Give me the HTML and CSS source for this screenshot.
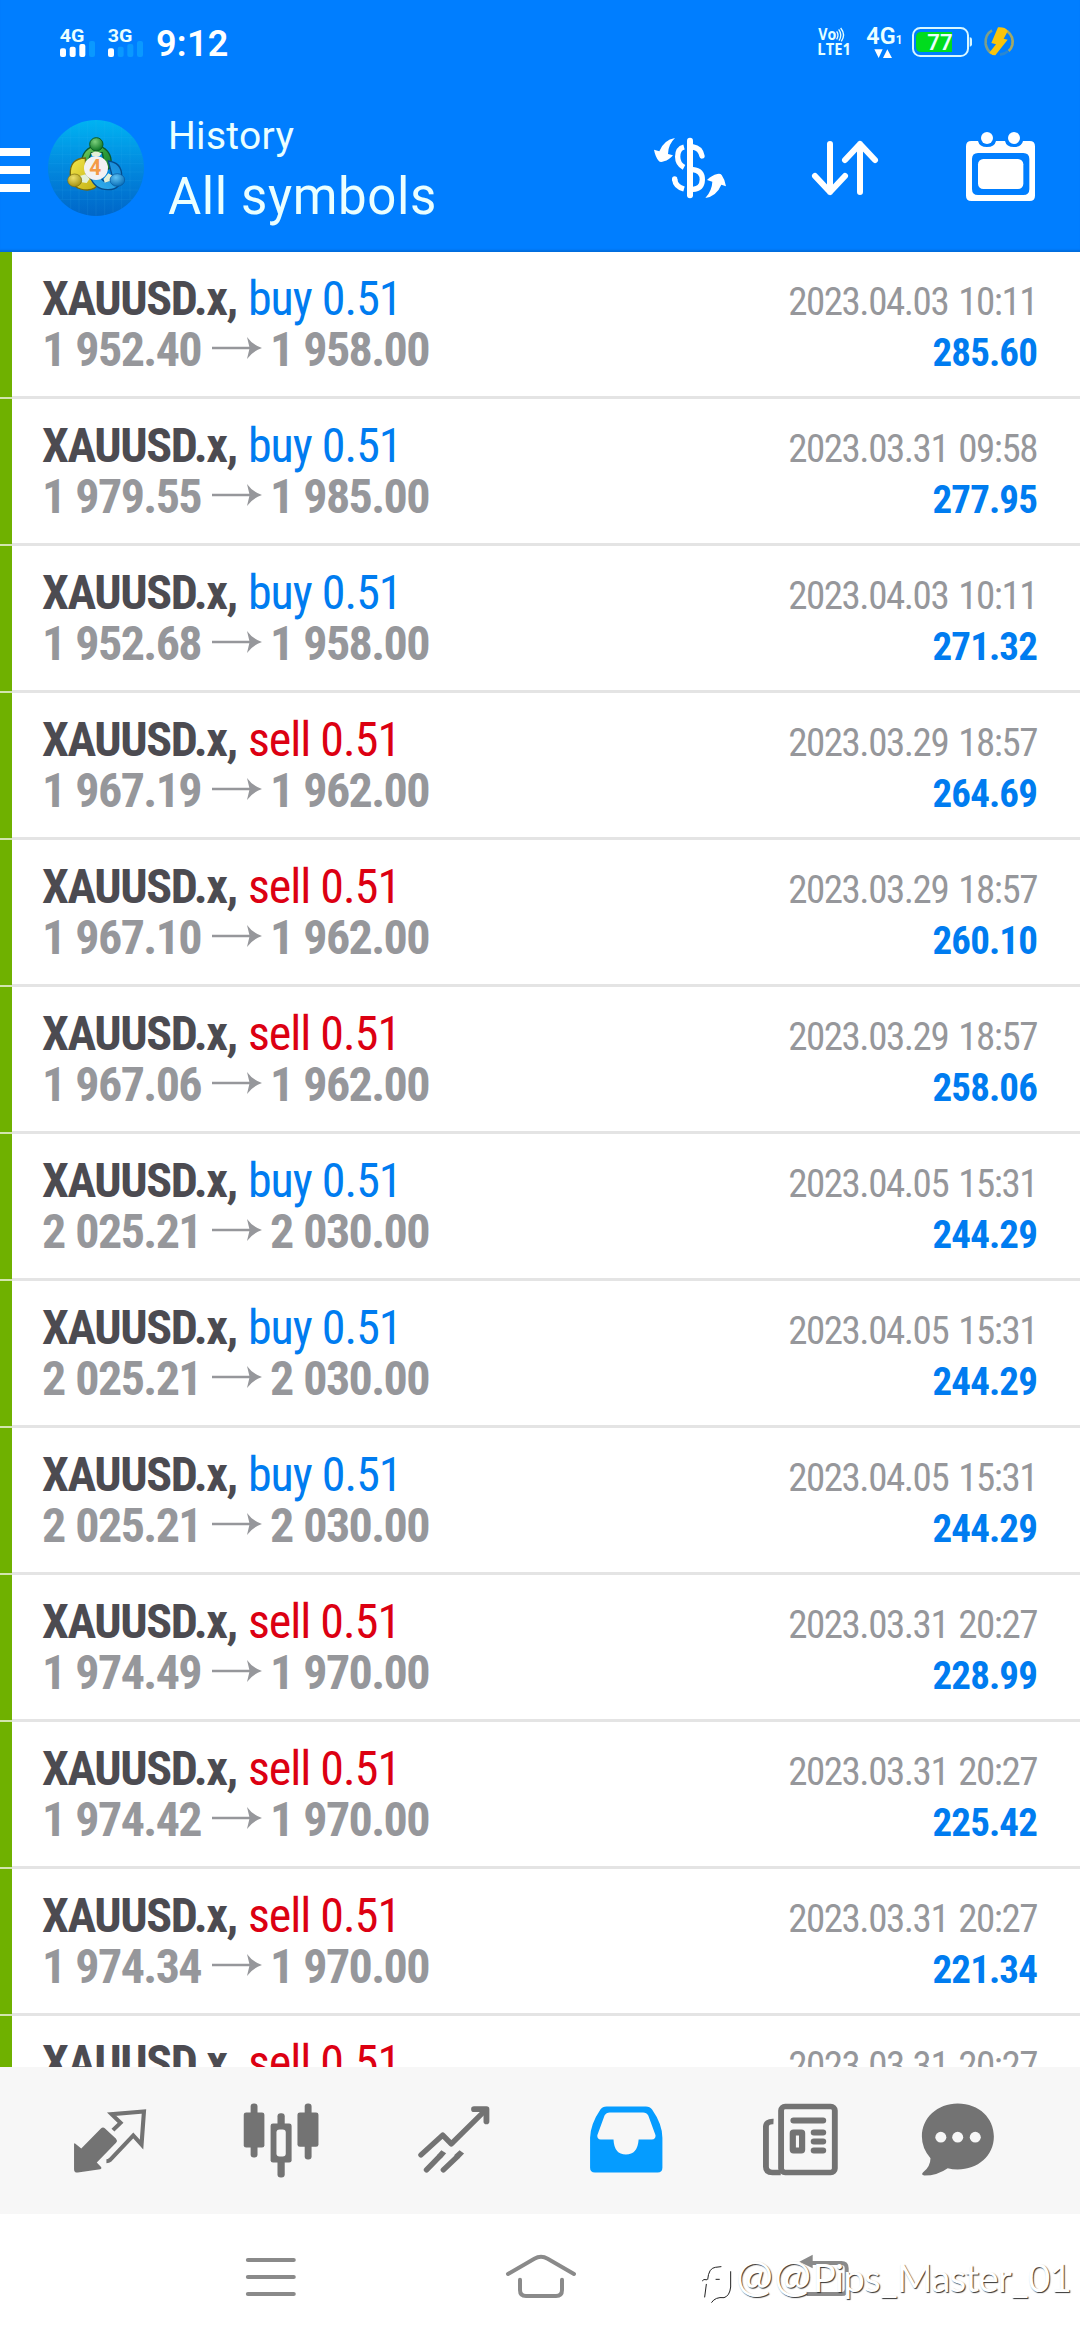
FILE: index.html
```html
<!DOCTYPE html>
<html lang="en">
<head>
<meta charset="utf-8">
<title>History</title>
<link rel="stylesheet" href="styles.css">
</head>
<body>
<svg class="defs" width="0" height="0" aria-hidden="true">
  <symbol id="to" viewBox="0 0 150 66"><path d="M0 29H112L105 0Q122 24 150 33Q122 42 105 66L112 37H0Z"/></symbol>
</svg>
<div class="screen">
  <header class="header">
    <div class="status">
      <svg width="36" height="36" viewBox="180 72 108 108"><text class="net" x="179" y="125" textLength="74" lengthAdjust="spacingAndGlyphs">4G</text><g fill="#fff"><rect x="180" y="145" width="18" height="26" rx="6"/><rect x="209" y="140" width="18" height="31" rx="6"/><rect x="238" y="132" width="18" height="39" rx="6"/></g><rect x="267" y="123" width="18" height="48" rx="6" fill="#0a99ff"/></svg>
      <svg width="36" height="36" viewBox="324 72 108 108"><text class="net" x="323" y="125" textLength="74" lengthAdjust="spacingAndGlyphs">3G</text><rect x="324" y="145" width="18" height="26" rx="6" fill="#fff"/><g fill="#0a99ff"><rect x="353" y="140" width="18" height="31" rx="6"/><rect x="382" y="132" width="18" height="39" rx="6"/><rect x="411" y="123" width="18" height="48" rx="6"/></g></svg>
      <span class="clock">9:12</span>
      <div class="status-right">
        <svg width="36" height="36" viewBox="648 72 108 108"><text class="lte" x="655" y="121" textLength="54" lengthAdjust="spacingAndGlyphs">Vo</text><path d="M710 94Q718 105 710 118M716 88Q728 104 717 122M722 84Q738 104 724 124" fill="none" stroke="#e4ffff" stroke-width="4"/><text class="lte" x="652" y="165" textLength="101" lengthAdjust="spacingAndGlyphs">LTE1</text></svg>
        <svg width="38" height="36" viewBox="792 72 114 108"><text class="g4" x="799" y="132" textLength="88" lengthAdjust="spacingAndGlyphs">4G</text><text class="g1" x="887" y="132">1</text><path d="M823 148H848L836 174ZM849 174L862 148L876 174Z" fill="#fff"/></svg>
        <svg width="62" height="36" viewBox="933 72 186 108"><rect x="939" y="84" width="165" height="84" rx="22" fill="none" stroke="#d9f7ff" stroke-width="6"/><path d="M1056 96V156H964Q948 156 948 140V112Q948 96 964 96Z" fill="#00dc1e"/><path d="M1109 112Q1116 112 1116 118V133Q1116 140 1109 140Z" fill="#d9f7ff"/><text class="bat" x="982" y="149" textLength="76" lengthAdjust="spacingAndGlyphs">77</text></svg>
        <svg width="34" height="36" viewBox="1146 72 102 108"><g fill="none" stroke-width="8"><path d="M1176 91Q1154 104 1157 132Q1160 150 1174 160" stroke="#7d9f88"/><path d="M1222 94Q1242 110 1237 135Q1234 146 1226 153" stroke="#a2a966"/><path d="M1224 154Q1212 164 1200 163" stroke="#2b87cf"/></g><path d="M1194 82Q1214 80 1224 92L1211 116L1223 119L1186 166Q1175 166 1168 158L1188 133L1174 129Z" fill="#f8c40c"/></svg>
      </div>
    </div>
    <div class="toolbar">
      <svg class="burger" width="30" height="44" viewBox="0 0 30 44"><path d="M0 0H30V8H0ZM0 18H30V26H0ZM0 36H30V44H0Z" fill="#fff"/></svg>
      <svg class="logo" width="96" height="96" viewBox="24 30 288 288">
        <defs>
          <linearGradient id="disc" x1="0" y1="0" x2="0" y2="1"><stop offset="0" stop-color="#00b3f2"/><stop offset=".5" stop-color="#0288de"/><stop offset="1" stop-color="#0066c8"/></linearGradient>
          <linearGradient id="gr" x1="0" y1="0" x2="1" y2="1"><stop offset="0" stop-color="#8fdc6a"/><stop offset=".5" stop-color="#2f9e3c"/><stop offset="1" stop-color="#14802c"/></linearGradient>
          <linearGradient id="ye" x1="0" y1="0" x2="1" y2="1"><stop offset="0" stop-color="#f3e64c"/><stop offset="1" stop-color="#c1ae10"/></linearGradient>
          <linearGradient id="bl" x1="1" y1="0" x2="0" y2="1"><stop offset="0" stop-color="#1489d8"/><stop offset="1" stop-color="#35b0ee"/></linearGradient>
          <radialGradient id="gh" cx=".4" cy=".3" r=".7"><stop offset="0" stop-color="#7cd07c"/><stop offset="1" stop-color="#0d7625"/></radialGradient>
          <radialGradient id="yh" cx=".4" cy=".3" r=".7"><stop offset="0" stop-color="#eee06a"/><stop offset="1" stop-color="#a59312"/></radialGradient>
          <radialGradient id="bh" cx=".4" cy=".3" r=".7"><stop offset="0" stop-color="#5fc2f4"/><stop offset="1" stop-color="#0b6fb8"/></radialGradient>
        </defs>
        <circle cx="168" cy="174" r="144" fill="url(#disc)"/>
        <path d="M67 82V268M92 52V296M117 42V308M143 34V316M168 30V318M194 34V316M219 42V308M245 52V296M270 82V268M60 82H276M42 108H294M32 134H304M26 160H310M26 186H310M32 212H304M42 240H294M60 268H276" stroke="#48bbf5" stroke-opacity=".18" stroke-width="2"/>
        <path d="M126 162A44 47 0 1 1 213 162Q212 180 196 178L187 128H154L142 160Z" fill="url(#gr)" stroke="#0d5a2c" stroke-width="4"/>
        <path d="M136 144Q88 145 91 195Q96 240 142 240Q168 239 176 220L138 198Z" fill="url(#ye)" stroke="#75690e" stroke-width="4"/>
        <path d="M205 153Q246 158 245 199Q242 240 203 239Q165 239 151 202L184 205Q198 227 217 200Z" fill="url(#bl)" stroke="#064c8b" stroke-width="4"/>
        <path d="M153 130L168 123L185 130L179 138H157ZM119 198L137 193L149 206L140 219L125 217ZM191 207L205 190L220 199L210 213L194 218Z" fill="#e3f0d8"/>
        <circle cx="169" cy="103" r="20" fill="url(#gh)" stroke="#0c5c24" stroke-width="3"/>
        <ellipse cx="104" cy="211" rx="21" ry="19" fill="url(#yh)" stroke="#7c6d10" stroke-width="2"/>
        <ellipse cx="232" cy="210" rx="22" ry="19" fill="url(#bh)" stroke="#07559a" stroke-width="2"/>
        <circle cx="168" cy="174" r="36" fill="#f2f1f3"/>
        <text class="four" x="148" y="196" textLength="36" lengthAdjust="spacingAndGlyphs">4</text>
      </svg>
      <div class="titles"><div class="sub">History</div><div class="main">All symbols</div></div>
      <div class="actions">
        <svg width="90" height="90" viewBox="135 369 270 270"><g fill="none" stroke="#fff" stroke-width="16" stroke-linecap="round"><path d="M270 422V586" stroke-width="18"/><path d="M252 441Q233 446 233 470Q233 492 252 502M224 538Q226 560 252 567" stroke-linecap="butt"/><path d="M279 441Q301 444 306 468M279 509Q307 512 307 539Q306 567 279 568"/><path d="M224 538L224 537"/></g><path d="M225 414Q191 420 178 454L162 449Q166 471 177 484Q182 488 192 484Q208 480 219 466L204 462Q204 434 225 414ZM316 594Q350 588 364 554L378 559Q376 541 365 525Q361 520 352 522Q335 526 321 540L337 545Q336 572 316 594Z" fill="#fff"/></svg>
        <svg width="90" height="90" viewBox="603 369 270 270"><path d="M693 432V576M648 528L693 576L738 528M783 576V432M738 480L783 432L828 480" fill="none" stroke="#fff" stroke-width="18" stroke-linecap="round" stroke-linejoin="round"/></svg>
        <svg width="90" height="90" viewBox="1065 369 270 270"><path fill-rule="evenodd" d="M1114 423H1134Q1138 441 1161 441Q1184 441 1188 423H1215Q1219 441 1242 441Q1265 441 1269 423H1289Q1305 423 1305 439V587Q1305 603 1289 603H1114Q1098 603 1098 587V439Q1098 423 1114 423ZM1134 459Q1116 459 1116 477V567Q1116 585 1134 585H1270Q1288 585 1288 567V477Q1288 459 1270 459Z" fill="#fff"/><rect x="1134" y="477" width="136" height="90" rx="16" fill="#fff"/><circle cx="1161" cy="414" r="18" fill="#fff"/><circle cx="1242" cy="414" r="18" fill="#fff"/></svg>
      </div>
    </div>
  </header>

  <main class="list">
    <article class="deal"><div class="line"><span><b class="symbol">XAUUSD.x,</b> <span class="buy">buy 0.51</span></span><time>2023.04.03 10:11</time></div><div class="line"><span class="prices">1 952.40<svg class="to"><use href="#to"/></svg>1 958.00</span><b class="profit">285.60</b></div></article>
    <article class="deal"><div class="line"><span><b class="symbol">XAUUSD.x,</b> <span class="buy">buy 0.51</span></span><time>2023.03.31 09:58</time></div><div class="line"><span class="prices">1 979.55<svg class="to"><use href="#to"/></svg>1 985.00</span><b class="profit">277.95</b></div></article>
    <article class="deal"><div class="line"><span><b class="symbol">XAUUSD.x,</b> <span class="buy">buy 0.51</span></span><time>2023.04.03 10:11</time></div><div class="line"><span class="prices">1 952.68<svg class="to"><use href="#to"/></svg>1 958.00</span><b class="profit">271.32</b></div></article>
    <article class="deal"><div class="line"><span><b class="symbol">XAUUSD.x,</b> <span class="sell">sell 0.51</span></span><time>2023.03.29 18:57</time></div><div class="line"><span class="prices">1 967.19<svg class="to"><use href="#to"/></svg>1 962.00</span><b class="profit">264.69</b></div></article>
    <article class="deal"><div class="line"><span><b class="symbol">XAUUSD.x,</b> <span class="sell">sell 0.51</span></span><time>2023.03.29 18:57</time></div><div class="line"><span class="prices">1 967.10<svg class="to"><use href="#to"/></svg>1 962.00</span><b class="profit">260.10</b></div></article>
    <article class="deal"><div class="line"><span><b class="symbol">XAUUSD.x,</b> <span class="sell">sell 0.51</span></span><time>2023.03.29 18:57</time></div><div class="line"><span class="prices">1 967.06<svg class="to"><use href="#to"/></svg>1 962.00</span><b class="profit">258.06</b></div></article>
    <article class="deal"><div class="line"><span><b class="symbol">XAUUSD.x,</b> <span class="buy">buy 0.51</span></span><time>2023.04.05 15:31</time></div><div class="line"><span class="prices">2 025.21<svg class="to"><use href="#to"/></svg>2 030.00</span><b class="profit">244.29</b></div></article>
    <article class="deal"><div class="line"><span><b class="symbol">XAUUSD.x,</b> <span class="buy">buy 0.51</span></span><time>2023.04.05 15:31</time></div><div class="line"><span class="prices">2 025.21<svg class="to"><use href="#to"/></svg>2 030.00</span><b class="profit">244.29</b></div></article>
    <article class="deal"><div class="line"><span><b class="symbol">XAUUSD.x,</b> <span class="buy">buy 0.51</span></span><time>2023.04.05 15:31</time></div><div class="line"><span class="prices">2 025.21<svg class="to"><use href="#to"/></svg>2 030.00</span><b class="profit">244.29</b></div></article>
    <article class="deal"><div class="line"><span><b class="symbol">XAUUSD.x,</b> <span class="sell">sell 0.51</span></span><time>2023.03.31 20:27</time></div><div class="line"><span class="prices">1 974.49<svg class="to"><use href="#to"/></svg>1 970.00</span><b class="profit">228.99</b></div></article>
    <article class="deal"><div class="line"><span><b class="symbol">XAUUSD.x,</b> <span class="sell">sell 0.51</span></span><time>2023.03.31 20:27</time></div><div class="line"><span class="prices">1 974.42<svg class="to"><use href="#to"/></svg>1 970.00</span><b class="profit">225.42</b></div></article>
    <article class="deal"><div class="line"><span><b class="symbol">XAUUSD.x,</b> <span class="sell">sell 0.51</span></span><time>2023.03.31 20:27</time></div><div class="line"><span class="prices">1 974.34<svg class="to"><use href="#to"/></svg>1 970.00</span><b class="profit">221.34</b></div></article>
    <article class="deal"><div class="line"><span><b class="symbol">XAUUSD.x,</b> <span class="sell">sell 0.51</span></span><time>2023.03.31 20:27</time></div></article>
  </main>

  <nav class="tabs">
    <svg preserveAspectRatio="none" viewBox="159.7 256.5 319.4 330"><path d="M215 430Q216 427 219 430L236 444L293 384Q299 378 305 384L337 415Q342 421 337 427L281 486L294 500Q296 504 291 506L226 516Q215 517 215 506Z" fill="#737373"/><path d="M328 389L350 367L324 341L418 333L411 432L387 405L320 478Q315 482 309 482" fill="none" stroke="#737373" stroke-width="12"/></svg>
    <svg preserveAspectRatio="none" viewBox="660.4 256.5 319.4 330"><g fill="#737373"><rect x="729" y="309" width="20" height="162" rx="9"/><rect x="709" y="336" width="60" height="105" rx="7"/><rect x="886" y="309" width="20" height="168" rx="9"/><rect x="865" y="336" width="61" height="103" rx="7"/><rect x="807" y="338" width="21" height="60" rx="9"/><rect x="807" y="460" width="21" height="71" rx="9"/><rect x="787" y="369" width="61" height="117" rx="7"/></g><rect x="804" y="387" width="27" height="81" rx="9" fill="#f7f7f7"/></svg>
    <svg preserveAspectRatio="none" viewBox="1161 256.5 319.4 330"><g fill="none" stroke="#737373" stroke-width="16" stroke-linecap="round" stroke-linejoin="round"><path d="M1222 463L1285 404L1310 430L1408 330"/><path d="M1376 326H1412V363" stroke-width="17"/><path d="M1238 508L1274 470M1287 508L1326 470"/></g><path d="M1268 464L1281 449L1295 458L1282 474ZM1318 464L1334 449L1347 459L1333 474Z" fill="#737373"/></svg>
    <svg preserveAspectRatio="none" viewBox="93.5 256.5 319.4 330"><path fill-rule="evenodd" d="M194 318H308Q320 318 326 327Q356 371 356 412V502Q356 516 342 516H160Q146 516 146 502V412Q147 371 176 327Q182 318 194 318ZM203 336Q193 336 188 345L167 404Q166 416 177 417H214Q216 462 250 462Q284 462 287 417H325Q337 416 336 404L315 345Q310 336 300 336Z" fill="#059cff"/></svg>
    <svg preserveAspectRatio="none" viewBox="594.2 256.5 319.4 330"><g fill="none" stroke="#737373"><rect x="699" y="318" width="156" height="198" rx="12" stroke-width="17"/><path d="M677 363Q655 362 655 379V499Q655 516 674 516H698" stroke-width="17"/><path d="M735 360H821M794 396H821M794 423H821M794 450H821" stroke-width="18" stroke-linecap="round"/><rect x="733" y="396" width="27" height="54" rx="2" stroke-width="18"/></g></svg>
    <svg preserveAspectRatio="none" viewBox="1094.8 256.5 319.4 330"><path d="M1213 309C1276 309 1318 354 1318 408C1318 466 1271 507 1213 507Q1197 507 1184 503Q1154 525 1116 525Q1106 523 1112 516Q1134 498 1134 473Q1109 444 1109 408C1109 352 1154 309 1213 309Z" fill="#737373"/><g fill="#f7f7f7"><circle cx="1164" cy="410" r="16"/><circle cx="1213" cy="410" r="16"/><circle cx="1264" cy="410" r="16"/></g></svg>
  </nav>

  <footer class="sysnav">
    <svg preserveAspectRatio="none" viewBox="699.9 768 174.2 180"><path d="M720 780H853M720 831H853M720 882H853" stroke="#8a8a8a" stroke-width="12" stroke-linecap="round"/></svg>
    <svg viewBox="93 48 180 180"><path d="M84 102L163 56Q183 45 203 56L282 102M120 119V150Q120 168 138 168H228Q246 168 246 150V119" fill="none" stroke="#8a8a8a" stroke-width="12" stroke-linecap="round"/></svg>
    <svg viewBox="303 33 180 180"><path d="M358 50L398 29V70Z" fill="#8a8a8a"/><path d="M390 54H484Q500 54 500 70V131Q500 147 484 147H380" fill="none" stroke="#8a8a8a" stroke-width="12"/></svg>
    <div class="watermark">
      <svg width="36" height="44" viewBox="48 48 108 132"><g fill="none" stroke-linecap="round"><path d="M54 152Q70 158 74 134L78 104H67M80 104Q84 67 110 67Q148 66 150 85V123Q148 158 125 159Q103 159 96 172M107 104H118" stroke="#fff" stroke-width="11"/><path d="M74 156L79 118M67 107Q70 101 80 104M83 103Q86 69 106 67L123 65M152 80V126Q149 153 132 158Q106 155 95 172M108 103H118" stroke="#222" stroke-width="3"/></g></svg>
      <span class="mark"><span class="at">@@</span>Pips_Master_01</span>
    </div>
  </footer>
</div>
</body>
</html>
```
FILE: styles.css
```css
* { box-sizing: border-box; }
body { margin: 0; background: #fff; font-family: Roboto, "Noto Sans", sans-serif; }
svg { display: block; flex: none; overflow: visible; }
.defs { position: absolute; }
.screen { width: 1080px; height: 2340px; display: flex; flex-direction: column; overflow: hidden; }

.header { flex: none; height: 252px; background: #007eff; box-shadow: inset 0 -3px 2px -1px #006ddd; color: #fff; }
.status { height: 84px; padding: 24px 64px 0 60px; display: flex; align-items: flex-start; gap: 12px; }
.clock { font-size: 36px; font-weight: 600; line-height: 42px; margin-top: -1px; letter-spacing: .3px; }
.status-right { margin-left: auto; display: flex; gap: 9px; }
.status-right svg:first-child { margin-right: 3px; }
.net { font: 700 56px Roboto, sans-serif; fill: #eaffff; }
.lte { font: 700 46px "Open Sans", sans-serif; fill: #e4ffff; }
.g4 { font: 600 74px Roboto, sans-serif; fill: #eaffff; }
.g1 { font: 600 36px Roboto, sans-serif; fill: #eaffff; }
.bat { font: 600 66px Roboto, sans-serif; fill: #eaffff; }
.four { font: 700 66px Roboto, sans-serif; fill: #f49a45; }

.toolbar { height: 168px; padding-right: 35px; display: flex; align-items: center; }
.burger { margin: 4px 18px 0 0; }
.titles { margin: 0 0 0 24px; padding-top: 2px; color: #eaffff; font-weight: 400; }
.sub { font-size: 39px; line-height: 50px; letter-spacing: .3px; margin-bottom: 5px; }
.main { font-size: 51px; line-height: 62px; letter-spacing: .6px; }
.actions { margin-left: auto; display: flex; gap: 65px; }

.list { flex: none; height: 1815px; overflow: hidden; font-family: "Roboto Condensed", Roboto, sans-serif; }
.deal { height: 147px; padding: 21px 42px 0 30px; border-left: 12px solid #6fb100; border-image: linear-gradient(#6fb100 0 144px, #d3e5ae 144px) 1; border-width: 0 0 0 12px; box-shadow: inset 0 -3px #e4e4e4; }
.line { height: 51px; line-height: 51px; font-size: 48px; display: flex; justify-content: space-between; align-items: baseline; white-space: nowrap; }
.symbol { color: #4c4b51; font-weight: 700; letter-spacing: -1.4px; }
.buy, .sell { color: #007cf0; letter-spacing: -1px; }
.sell { color: #dc0012; }
.prices { color: #96979b; font-weight: 700; letter-spacing: -1.6px; word-spacing: 1.2px; display: flex; align-items: baseline; }
.to { width: 50px; height: 22px; margin: 0 8px 0 11px; fill: #96979b; transform: translateY(-7px); }
time { color: #96979b; font-size: 39px; letter-spacing: -1.45px; word-spacing: 2.4px; margin-right: 1px; }
.profit { color: #007cf0; font-size: 39px; font-weight: 700; letter-spacing: -.9px; margin-right: 1px; }

.tabs { flex: none; height: 147px; padding: 0 53px 0 55px; background: #f7f7f7; display: flex; align-items: center; justify-content: space-between; }
.tabs svg { width: 110px; height: 110px; }
.sysnav { position: relative; flex: 1; padding: 18px 239px 0 241px; display: flex; align-items: center; justify-content: space-between; }
.sysnav > svg { width: 60px; height: 60px; }
.watermark { position: absolute; left: 696px; top: 47px; display: flex; gap: 4px; }
.mark { margin-top: -8px; font: 400 38.5px/46px Lato, sans-serif; letter-spacing: -.8px; color: #fff; text-shadow: 1px 1px 1px #333; white-space: nowrap; }
.at { font-size: 44px; letter-spacing: 1.5px; line-height: 1; }
```
